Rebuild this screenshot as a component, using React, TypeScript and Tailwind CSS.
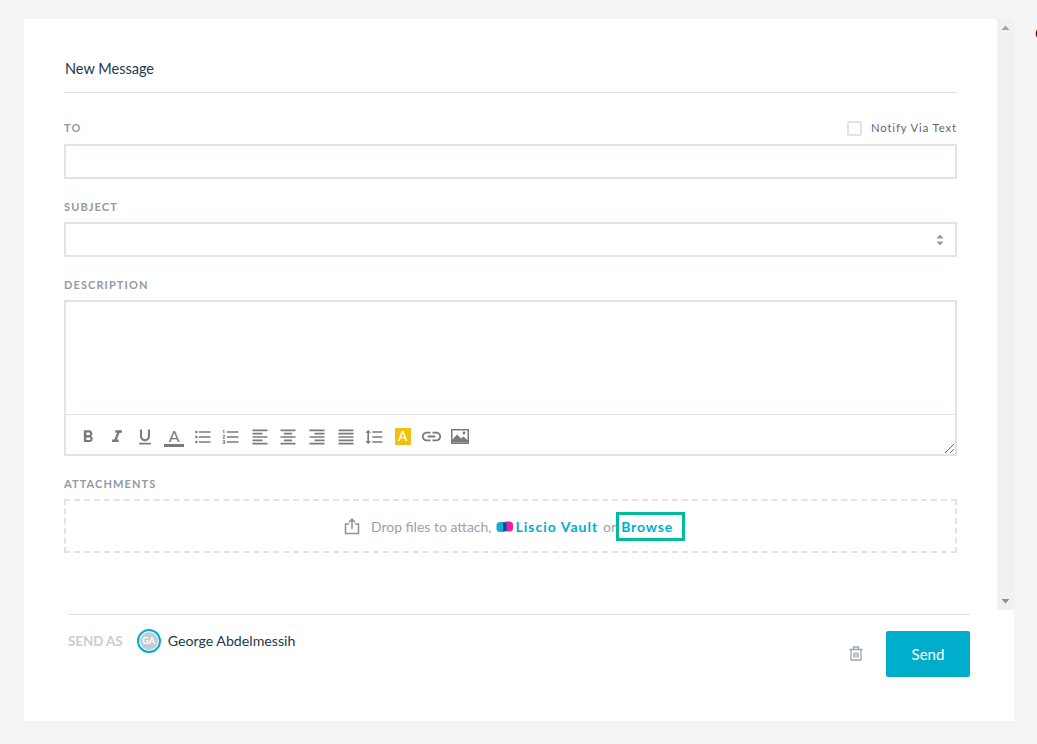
import {
  MdFormatBold,
  MdFormatItalic,
  MdFormatUnderlined,
  MdFormatListBulleted,
  MdFormatListNumbered,
  MdFormatAlignLeft,
  MdFormatAlignCenter,
  MdFormatAlignRight,
  MdFormatAlignJustify,
  MdFormatLineSpacing,
  MdLink,
} from "react-icons/md";

function Label({ text }: { text: string }) {
  return (
    <div className="text-[11px] leading-4 font-bold tracking-[1.1px] text-[#919aa5]">{text}</div>
  );
}

function ColorA() {
  return (
    <div className="flex h-5 w-5 flex-col items-center justify-end">
      <span className="text-[16px] leading-[14px] text-[#7b7b7b]">A</span>
      <span className="mt-[1px] h-[3px] w-5 bg-[#7b7b7b]" />
    </div>
  );
}

function HighlightA() {
  return (
    <div className="flex h-[17px] w-4 items-center justify-center rounded-[1px] bg-[#f2bf0f] text-[13px] leading-none font-semibold text-white">
      A
    </div>
  );
}

function ImageIcon() {
  return (
    <svg width="18" height="15" viewBox="0 0 18 15">
      <rect x="0.75" y="0.75" width="16.5" height="13.5" fill="none" stroke="#7b7b7b" strokeWidth="1.5" />
      <path d="M1 13.5 V11 L6 5.5 L10 9.5 L12.5 7.5 L17 11.5 V13.5 Z" fill="#7b7b7b" />
      <circle cx="13" cy="4" r="1.4" fill="#7b7b7b" />
    </svg>
  );
}

const tools = [
  <MdFormatBold size={20} />,
  <MdFormatItalic size={20} />,
  <MdFormatUnderlined size={20} />,
  <ColorA />,
  <MdFormatListBulleted size={20} />,
  <MdFormatListNumbered size={20} />,
  <MdFormatAlignLeft size={20} />,
  <MdFormatAlignCenter size={20} />,
  <MdFormatAlignRight size={20} />,
  <MdFormatAlignJustify size={20} />,
  <MdFormatLineSpacing size={20} />,
  <HighlightA />,
  <MdLink size={23} />,
  <ImageIcon />,
];

export default function App() {
  return (
    <div
      className="relative h-[744px] w-[1037px] overflow-hidden bg-[#f4f4f4] pt-[19px] pl-6"
      style={{ fontFamily: 'Lato, "Noto Sans", sans-serif' }}
    >
      {/* clipped bit of text at the window edge */}
      <span className="absolute top-[23px] left-[1035px] text-[15px] leading-5 text-[#222]">C</span>

      <div className="h-[702px] w-[990px] bg-white">
        <div className="flex h-[591px]">
          {/* Form */}
          <div className="w-[973px] pt-[38px] pr-10 pl-10">
            <h1 className="pl-px text-[14.5px] leading-6 font-normal text-[#24374c]">New Message</h1>
            <div className="mt-[11px] h-px bg-[#dfe1e4]" />

            <div className="mt-[27px] flex h-4 items-center justify-between">
              <Label text="TO" />
              <label className="flex items-center gap-[9px]">
                <span className="h-[15px] w-[15px] rounded-[2px] border-2 border-[#e0e3e8] bg-white" />
                <span className="text-[11.25px] tracking-[0.9px] text-[#5b6675]">Notify Via Text</span>
              </label>
            </div>
            <div className="mt-[8px] h-[35px] border-2 border-[#e0e3e8] bg-white" />

            <div className="mt-[20px]">
              <Label text="SUBJECT" />
            </div>
            <div className="mt-[7px] flex h-[35px] items-center justify-end border-2 border-[#e0e3e8] bg-white pr-[11px]">
              <svg width="8" height="12" viewBox="0 0 8 12">
                <path d="M4 0.5 L7.5 4.5 H0.5 Z" fill="#8c99a8" />
                <path d="M4 11.5 L7.5 7.5 H0.5 Z" fill="#8c99a8" />
              </svg>
            </div>

            <div className="mt-[20px]">
              <Label text="DESCRIPTION" />
            </div>
            <div className="relative mt-[7px] h-[156px] border-2 border-[#e0e3e8] bg-white">
              <div className="h-[113px] border-b border-[#e0e3e8]" />
              <div className="flex h-[39px] items-center pt-[4px] pl-[8px] text-[#7b7b7b]">
                {tools.map((icon, i) => (
                  <div key={i} className="flex h-6 w-[28.6px] items-center justify-center">
                    {icon}
                  </div>
                ))}
              </div>
              <svg className="absolute right-0 bottom-0" width="11" height="11" viewBox="0 0 11 11">
                <path d="M1 10 L10 1 M6 10 L10 6" stroke="#666" strokeWidth="1" fill="none" />
              </svg>
            </div>

            <div className="mt-[20px]">
              <Label text="ATTACHMENTS" />
            </div>
            <div className="mt-[7px] flex h-[54px] items-center justify-center border-2 border-dashed border-[#e0e3e8] pl-[8px] text-[14px] text-[#9aa2ad]">
              <svg width="16" height="17" viewBox="0 0 16 17" fill="none" stroke="#8c97a3" strokeWidth="1.6">
                <path d="M5 6 H1.5 V15.5 H14.5 V6 H11" />
                <path d="M8 11 V1.5 M5 4.2 L8 1.2 L11 4.2" />
              </svg>
              <span className="ml-[11px]">Drop files to attach,</span>
              <svg className="ml-[4px]" width="17" height="11" viewBox="0 0 17 11">
                <rect x="7" y="0.5" width="10" height="10" rx="3.5" fill="#ec1fa6" />
                <rect x="0.5" y="1" width="10" height="10" rx="3.5" fill="#12afd0" />
                <rect x="7" y="1.5" width="3.5" height="8.5" fill="#1f3f8f" />
              </svg>
              <span className="ml-[3px] font-bold tracking-[1px] text-[#00aecb]">Liscio Vault</span>
              <span className="ml-[5px]">or</span>
              <span className="border-[3px] border-[#00bc9b] py-[2px] pr-[9px] pl-[2px] leading-[19px] font-bold tracking-[0.85px] text-[#00aecb]">
                Browse
              </span>
            </div>
          </div>

          {/* Scrollbar */}
          <div className="flex w-[17px] flex-col items-center justify-between bg-[#f1f1f1] py-[6px]">
            <svg width="9" height="6" viewBox="0 0 9 6">
              <path d="M4.5 0.5 L8.5 5 H0.5 Z" fill="#a3a3a3" />
            </svg>
            <svg width="9" height="6" viewBox="0 0 9 6">
              <path d="M4.5 5.5 L8.5 1 H0.5 Z" fill="#8f8f8f" />
            </svg>
          </div>
        </div>

        {/* Footer */}
        <div className="mt-1 ml-11 w-[902px]">
          <div className="h-px bg-[#dfe1e4]" />
          <div className="flex items-start justify-between">
            <div className="mt-[14px] flex items-center">
              <span className="pt-px text-[13.3px] font-bold text-[#c6ced8]">SEND AS</span>
              <div className="ml-[14px] flex h-6 w-6 items-center justify-center rounded-full border-2 border-[#00aecb] bg-white">
                <div className="flex h-[18px] w-[18px] items-center justify-center rounded-full bg-[#c5cbd3] text-[9px] font-bold text-white">
                  GA
                </div>
              </div>
              <span className="ml-[7px] text-[14.2px] text-[#24374c]">George Abdelmessih</span>
            </div>
            <div className="mt-4 flex items-center">
              <svg className="mb-[2px]" width="14" height="15" viewBox="0 0 14 15" fill="none" stroke="#9aa5b1" strokeWidth="1.3">
                <path d="M0.5 3.5 H13.5 M4.5 3.5 V1 H9.5 V3.5 M2 3.5 V14 H12 V3.5" />
                <path d="M5 6.5 V11.5 M7 6.5 V11.5 M9 6.5 V11.5" />
              </svg>
              <button className="ml-[23px] h-[46px] w-[84px] rounded-[2px] bg-[#00aecb] text-[15px] text-white">
                Send
              </button>
            </div>
          </div>
        </div>
      </div>
    </div>
  );
}
